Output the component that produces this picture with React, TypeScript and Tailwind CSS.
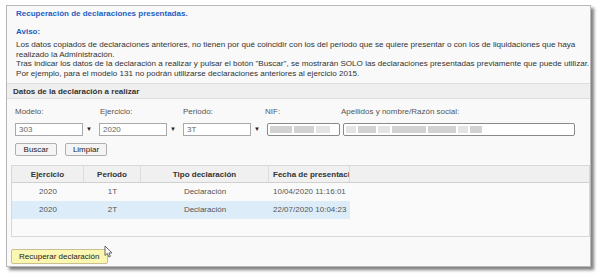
const font = "font-['Liberation_Sans',Arial,sans-serif]";

function Select({ value, w }: { value: string; w: string }) {
  return (
    <div className="flex items-center">
      <div className={`${w} h-[13px] border border-[#a9a9a9] bg-white px-[3px] text-[8px] leading-[11px] text-[#666]`}>
        {value}
      </div>
      <span className="w-[16px] pl-[3px] text-left text-[6px] leading-[13px] text-[#222]">▼</span>
    </div>
  );
}

function Blurred({ blocks, w }: { blocks: number[][]; w: string }) {
  return (
    <div className={`${w} h-[13px] rounded-[2px] border border-[#8a8a8a] bg-white p-[2px] flex gap-[2px]`}>
      {blocks.map(([bw, c], i) => (
        <div key={i} className="h-full blur-[0.6px]" style={{ width: bw, background: c === 1 ? "#d2d2d2" : "#e4e4e4" }} />
      ))}
    </div>
  );
}

const rows = [
  { ej: "2020", per: "1T", tipo: "Declaración", fecha: "10/04/2020 11:16:01", sel: false },
  { ej: "2020", per: "2T", tipo: "Declaración", fecha: "22/07/2020 10:04:23", sel: true },
];

const aviso = [
  "Los datos copiados de declaraciones anteriores, no tienen por qué coincidir con los del periodo que se quiere presentar o con los de liquidaciones que haya",
  "realizado la Administración.",
  "Tras indicar los datos de la declaración a realizar y pulsar el botón \"Buscar\", se mostrarán SOLO las declaraciones presentadas previamente que puede utilizar.",
  "Por ejemplo, para el modelo 131 no podrán utilizarse declaraciones anteriores al ejercicio 2015.",
];

export default function App() {
  return (
    <div className={`w-[599px] h-[275px] bg-white pl-[6px] pt-[5px] ${font}`}>
      <div className="w-[585px] h-[262px] border border-[#b8b8b8] bg-[#f9f9f9] shadow-[3px_3px_3px_rgba(0,0,0,0.5)] flex flex-col overflow-hidden">
        {/* Aviso */}
        <div className="pl-[9px] pt-[2px] pb-[5px]">
          <div className="text-[8px] font-bold leading-[12px] text-[#1e5fc2]">Recuperación de declaraciones presentadas.</div>
          <div className="mt-[6px] text-[8px] font-bold leading-[12px] text-[#1e5fc2]">Aviso:</div>
          <div className="mt-[2px] text-[8.1px] leading-[9.5px] text-[#333]">
            {aviso.map((l, i) => (
              <div key={i} className="whitespace-nowrap">{l}</div>
            ))}
          </div>
        </div>

        {/* Datos */}
        <div className="border-t border-b border-[#dcdcdc] bg-[#efefef] h-[16px] px-[6px] text-[8px] font-bold leading-[15px] text-[#333]">
          Datos de la declaración a realizar
        </div>
        <div className="px-[8px] pt-[8px]">
          <div className="flex text-[8px] leading-[10px] text-[#555]">
            <span className="w-[85px]">Modelo:</span>
            <span className="w-[83px]">Ejercicio:</span>
            <span className="w-[82px]">Periodo:</span>
            <span className="w-[76px]">NIF:</span>
            <span>Apellidos y nombre/Razón social:</span>
          </div>
          <div className="mt-[6px] flex items-center">
            <Select value="303" w="w-[68px]" />
            <Select value="2020" w="w-[68px]" />
            <Select value="3T" w="w-[68px]" />
            <Blurred w="w-[73px]" blocks={[[22, 1], [20, 1], [14, 2]]} />
            <div className="w-[3px]" />
            <Blurred w="w-[232px]" blocks={[[10, 2], [18, 1], [12, 2], [34, 1], [28, 1], [10, 2], [12, 1]]} />
          </div>
          <div className="mt-[7px] flex gap-[8px]">
            <button className="h-[13px] w-[42px] border border-[#b0b0b0] rounded-[2px] bg-[#f4f4f4] text-[8px] leading-[11px] text-[#222]">Buscar</button>
            <button className="h-[13px] w-[42px] border border-[#b0b0b0] rounded-[2px] bg-[#f4f4f4] text-[8px] leading-[11px] text-[#222]">Limpiar</button>
          </div>
        </div>

        {/* Grid */}
        <div className="ml-[4px] mt-[9px] h-[83px] border border-[#d8d8d8] bg-[#fafafa] text-[8px]">
          <div className="flex h-[17px] border-b border-[#d0d0d0] bg-[#f0f0f0] font-bold leading-[17px] text-[#333]">
            <div className="w-[72px] text-center border-r border-[#dcdcdc]">Ejercicio</div>
            <div className="w-[57px] text-center border-r border-[#dcdcdc]">Periodo</div>
            <div className="w-[128px] text-center border-r border-[#dcdcdc]">Tipo declaración</div>
            <div className="w-[81px] pl-[4px] whitespace-nowrap overflow-hidden border-r border-[#dcdcdc]">Fecha de presentación</div>
          </div>
          {rows.map((r, i) => (
            <div key={i} className={`flex w-[338px] h-[18px] leading-[18px] text-[#555] ${r.sel ? "bg-[#dcecf9]" : ""}`}>
              <div className="w-[72px] text-center">{r.ej}</div>
              <div className="w-[57px] text-center">{r.per}</div>
              <div className="w-[128px] text-center">{r.tipo}</div>
              <div className="w-[81px] pl-[4px] whitespace-nowrap">{r.fecha}</div>
            </div>
          ))}
        </div>

        {/* Footer */}
        <div className="relative px-[4px] pt-[5px]">
          <button className="h-[15px] px-[7px] border border-[#c8c090] rounded-[2px] bg-[#fbf6b0] text-[8px] leading-[13px] text-[#222]">
            Recuperar declaración
          </button>
          <svg className="absolute left-[97px] top-[8px]" width="9" height="13" viewBox="0 0 9 13">
            <path d="M1 1 L1 10.5 L3.3 8.4 L4.9 12 L6.4 11.3 L4.9 7.9 L8 7.9 Z" fill="#fff" stroke="#555" strokeWidth="0.9" strokeLinejoin="round" />
          </svg>
        </div>
      </div>
    </div>
  );
}
